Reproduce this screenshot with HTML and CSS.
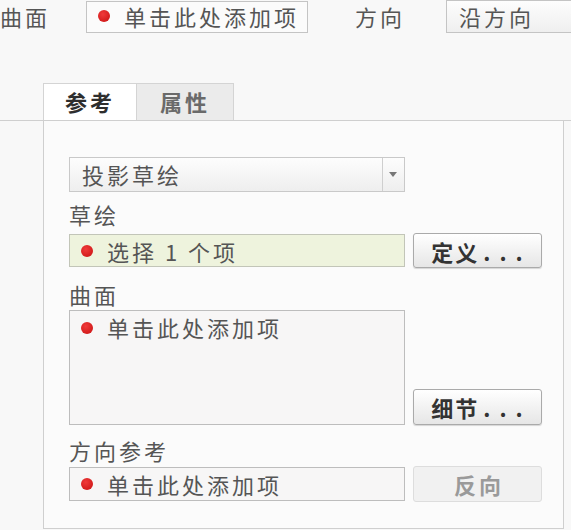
FILE: index.html
```html
<!DOCTYPE html>
<html>
   <head>
      <title>投影</title>
      <link rel="stylesheet" href="styles.css">
   </head>
   <body>
      <div class="top-bar">
         <span class="top-label">曲面</span>
         <div class="collector top-collector"><span class="dot"></span>单击此处添加项</div>
         <span class="top-label dir-label">方向</span>
         <div class="top-select">沿方向</div>
      </div>
      <div class="tabs">
         <div class="tab active">参考</div>
         <div class="tab">属性</div>
      </div>
      <div class="panel">
         <div class="select">
            <span class="select-text">投影草绘</span>
            <span class="select-arrow"></span>
         </div>
         <div class="field-label first">草绘</div>
         <div class="row">
            <div class="collector selected"><span class="dot"></span>选择 1 个项</div>
            <button class="btn">定义<span class="dots">...</span></button>
         </div>
         <div class="field-label">曲面</div>
         <div class="row bottom">
            <div class="collector listbox"><span class="dot"></span>单击此处添加项</div>
            <button class="btn">细节<span class="dots">...</span></button>
         </div>
         <div class="field-label last">方向参考</div>
         <div class="row">
            <div class="collector"><span class="dot"></span>单击此处添加项</div>
            <button class="btn disabled">反向</button>
         </div>
      </div>
   </body>
</html>
```
FILE: styles.css
```css
* {
   margin: 0;
   padding: 0;
   box-sizing: border-box;
   font-family: "Noto Sans CJK SC", "Liberation Sans", sans-serif;
}
body {
   width: 571px;
   height: 530px;
   overflow: hidden;
   background: #f8f8f8;
   color: #555555;
   font-size: 22px;
   letter-spacing: 3px;
}
.top-bar {
   display: flex;
   align-items: center;
   height: 33px;
}
.top-label {
   width: 86px;
   line-height: 31px;
}
.dir-label {
   width: 91px;
   margin-left: 47px;
}
.top-select {
   flex: 1;
   height: 33px;
   line-height: 30px;
   padding-left: 12px;
   border: 1px solid #c4c4c4;
   border-right: none;
   background: linear-gradient(#fdfdfd, #efefef);
   white-space: nowrap;
}
.collector {
   display: flex;
   align-items: center;
   width: 336px;
   height: 34px;
   padding-left: 11px;
   border: 1px solid #bdbdbd;
   background: #f7f6f6;
   white-space: nowrap;
}
.top-collector {
   width: 222px;
   height: 32px;
   padding-bottom: 2px;
   border-color: #c4c4c4;
   background: #fbfbfb;
}
.dot {
   width: 12px;
   height: 12px;
   margin-right: 14px;
   border-radius: 50%;
   background: radial-gradient(circle at 40% 35%, #f03a3a, #c81010);
   flex-shrink: 0;
}
.collector.selected {
   height: 33px;
   background: #eef3dd;
   border-color: #c2c5b8;
}
.collector.listbox {
   height: 115px;
   align-items: flex-start;
   padding-top: 0;
}
.collector.listbox .dot {
   margin-top: 11px;
}
.tabs {
   display: flex;
   margin-top: 50px;
   padding-left: 43px;
   border-bottom: 1px solid #cfcfcf;
}
.tab {
   width: 94px;
   height: 37px;
   line-height: 35px;
   text-align: center;
   font-weight: bold;
   color: #6a6a6a;
   background: #ebebeb;
   border: 1px solid #d4d4d4;
   border-bottom: none;
}
.tab + .tab {
   width: 97px;
   border-left: none;
}
.tab.active {
   background: #ffffff;
   color: #2e2e2e;
}
.panel {
   width: 521px;
   margin-left: 43px;
   padding: 36px 0 26px 25px;
   border: 1px solid #cfcfcf;
   border-top: none;
   background: #fbfbfb;
}
.select {
   display: flex;
   width: 336px;
   height: 35px;
   border: 1px solid #c9c9c9;
   background: linear-gradient(#fdfdfd, #eeeeee);
}
.select-text {
   flex: 1;
   padding-left: 12px;
   line-height: 32px;
}
.select-arrow {
   width: 22px;
   border-left: 1px solid #cfcfcf;
   position: relative;
}
.select-arrow::after {
   content: "";
   position: absolute;
   left: 6px;
   top: 14px;
   border-left: 4px solid transparent;
   border-right: 4px solid transparent;
   border-top: 5px solid #777777;
}
.field-label {
   line-height: 28px;
   padding-top: 12px;
   padding-bottom: 2px;
}
.field-label.first {
   line-height: 32px;
   padding-top: 6px;
   padding-bottom: 3px;
}
.field-label.last {
   padding-top: 11px;
}
.row {
   display: flex;
   align-items: center;
   gap: 8px;
}
.row.bottom {
   align-items: flex-end;
}
.btn {
   width: 129px;
   height: 35px;
   font-size: 22px;
   letter-spacing: 2px;
   font-weight: bold;
   color: #333333;
   border: 1px solid #aaaaaa;
   border-radius: 3px;
   background: linear-gradient(#ffffff, #e6e6e6);
   box-shadow: 0 1px 1px rgba(0, 0, 0, 0.15);
   padding-left: 8px;
}
.btn .dots {
   letter-spacing: 9px;
   margin-left: 4px;
}
.row.bottom .btn {
   height: 36px;
}
.btn.disabled {
   height: 36px;
   letter-spacing: 3px;
   padding-left: 3px;
   color: #9a9a9a;
   border-color: #dddddd;
   background: #f1f1f1;
   box-shadow: none;
}
```
